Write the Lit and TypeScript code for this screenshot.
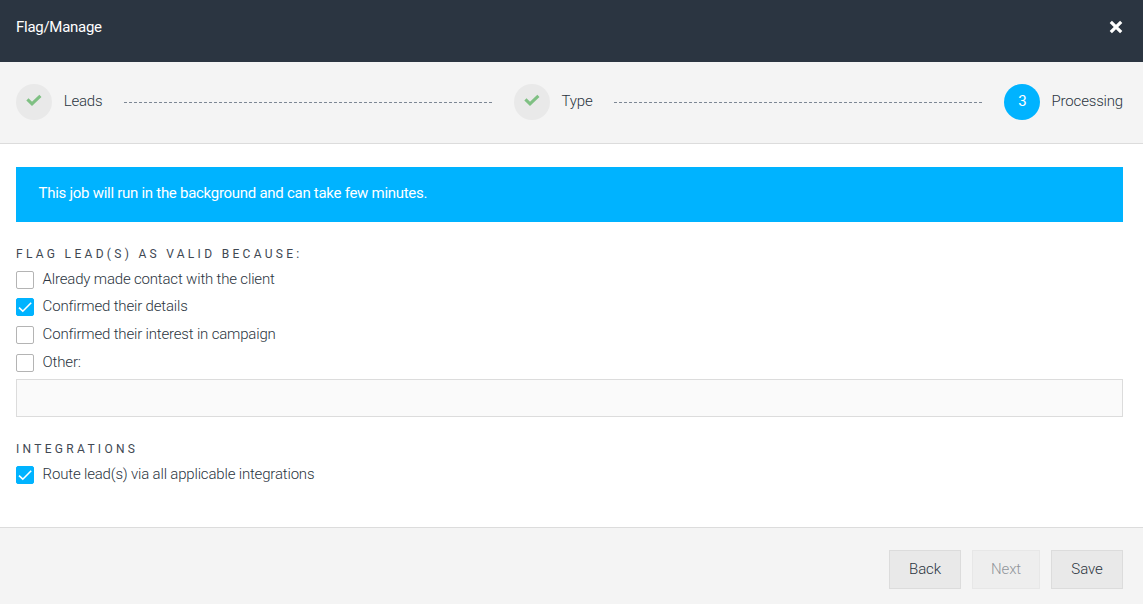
import { LitElement, css, html, svg } from "lit";
import { customElement, property, state } from "lit/decorators.js";

interface Reason {
  label: string;
  checked: boolean;
}

const STEPS = ["Leads", "Type", "Processing"];

/** Checkbox with a text label. */
@customElement("flag-checkbox")
export class FlagCheckbox extends LitElement {
  @property({ type: Boolean, reflect: true }) checked = false;
  @property() label = "";

  static override styles = css`
    :host {
      display: flex;
      align-items: flex-start;
      gap: 8.6px;
      cursor: pointer;
    }

    .box {
      box-sizing: border-box;
      flex: none;
      width: 18px;
      height: 18px;
      margin-top: 2px;
      border: 1px solid #b4b4b4;
      border-radius: 2px;
      background: #fff;
    }

    :host([checked]) .box {
      border-color: #00b3ff;
      background: #00b3ff;
    }

    .tick {
      display: block;
      width: 16px;
      height: 16px;
      fill: none;
      stroke: #fff;
      stroke-width: 1.6;
    }

    .label {
      line-height: 20px;
    }
  `;

  override render() {
    return html`
      <span class="box" role="checkbox" aria-checked=${this.checked}>
        ${this.checked
          ? html`<svg class="tick" viewBox="0 0 16 16">${svg`<path d="M2 8.6L5.8 12.2L14.2 3.8" />`}</svg>`
          : null}
      </span>
      <span class="label">${this.label}</span>
    `;
  }
}

/** Numbered wizard progress; finished steps show a tick. */
@customElement("flag-steps")
export class FlagSteps extends LitElement {
  @property({ type: Number }) current = 0;

  static override styles = css`
    :host {
      box-sizing: border-box;
      display: flex;
      align-items: center;
      height: 82px;
      padding: 0 20px 2px 16px;
      border-bottom: 1px solid #dcdcdc;
      background: #f4f4f4;
    }

    .badge {
      display: flex;
      flex: none;
      align-items: center;
      justify-content: center;
      width: 36px;
      height: 36px;
      border-radius: 50%;
      background: #e9e9e9;
    }

    .badge.active {
      background: #00b3ff;
      color: #fff;
      font-weight: 400;
    }

    .number,
    .name {
      line-height: 20px;
      padding-bottom: 2px;
    }

    .number {
      padding-left: 1px;
    }

    .name {
      margin-left: 11.7px;
    }

    .tick {
      width: 16px;
      height: 12px;
      margin-bottom: 3px;
      margin-left: 0.5px;
      fill: none;
      stroke: #7fc083;
      stroke-width: 3.1;
    }

    .line {
      flex: 1;
      height: 1px;
      margin: 1px 22px 0;
      background: repeating-linear-gradient(90deg, #7d8794 0 3px, transparent 3px 5px);
    }
  `;

  override render() {
    return STEPS.map(
      (name, i) => html`
        ${i > 0 ? html`<span class="line"></span>` : null}
        <span class="badge ${i === this.current ? "active" : ""}">
          ${i < this.current
            ? html`<svg class="tick" viewBox="0 0 16 12">${svg`<path d="M1.4 5.3L6 9.8L14.4 1.8" />`}</svg>`
            : html`<span class="number">${i + 1}</span>`}
        </span>
        <span class="name">${name}</span>
      `
    );
  }
}

@customElement("app-root")
export class AppRoot extends LitElement {
  @state() private reasons: Reason[] = [
    { label: "Already made contact with the client", checked: false },
    { label: "Confirmed their details", checked: true },
    { label: "Confirmed their interest in campaign", checked: false },
    { label: "Other:", checked: false },
  ];
  @state() private route = true;

  static override styles = css`
    :host {
      box-sizing: border-box;
      display: flex;
      flex-direction: column;
      height: 604px;
      background: #fff;
      color: #2b3541;
      font: 300 15px/20px Roboto, sans-serif;
      letter-spacing: -0.175px;
    }

    *,
    *::before,
    *::after {
      box-sizing: border-box;
    }

    .header {
      display: flex;
      align-items: flex-start;
      justify-content: space-between;
      height: 62px;
      padding: 17px 20px 0 16px;
      background: #2b3541;
      color: #fff;
      font-weight: 400;
      letter-spacing: -0.28px;
    }

    .close {
      display: flex;
      padding: 0;
      border: 0;
      margin-top: 2.6px;
      background: none;
    }

    .close svg {
      width: 14px;
      height: 14px;
      stroke: #fff;
      stroke-width: 3.2;
    }

    .body {
      flex: 1;
      padding: 23px 20px 0 16px;
    }

    .notice {
      height: 55px;
      padding: 16px 22.6px;
      background: #00b3ff;
      color: #fff;
      font-weight: 400;
      letter-spacing: -0.28px;
    }

    .heading {
      margin: 24px 0 6.8px;
      color: #404853;
      font-size: 12px;
      font-weight: 400;
      line-height: 16px;
      letter-spacing: 3.3px;
      text-transform: uppercase;
    }

    .reasons {
      display: grid;
      grid-auto-rows: 27.6px;
    }

    .other {
      display: block;
      width: 100%;
      height: 38px;
      margin-top: -0.2px;
      border: 1px solid #dcdcdc;
      background: #fafafa;
      font: inherit;
    }

    .footer {
      display: flex;
      justify-content: flex-end;
      gap: 11px;
      height: 77px;
      padding: 22px 20px 0;
      border-top: 1px solid #dcdcdc;
      background: #f4f4f4;
    }

    .button {
      width: 72px;
      height: 39px;
      padding: 0 0 2px;
      border: 1px solid #dcdcdc;
      background: #e9e9e9;
      color: inherit;
      font: inherit;
      letter-spacing: -0.1px;
    }

    .button:disabled {
      width: 68px;
      opacity: 0.5;
    }
  `;

  private toggle(index: number) {
    this.reasons = this.reasons.map((r, i) => (i === index ? { ...r, checked: !r.checked } : r));
  }

  override render() {
    return html`
      <header class="header">
        <span>Flag/Manage</span>
        <button class="close" aria-label="Close">
          <svg viewBox="0 0 14 14"><path d="M1.8 1.8L12.2 12.2M12.2 1.8L1.8 12.2" /></svg>
        </button>
      </header>
      <flag-steps .current=${2}></flag-steps>
      <main class="body">
        <div class="notice">This job will run in the background and can take few minutes.</div>
        <h2 class="heading">Flag lead(s) as valid because:</h2>
        <div class="reasons">
          ${this.reasons.map(
            (r, i) => html`
              <flag-checkbox .label=${r.label} .checked=${r.checked} @click=${() => this.toggle(i)}></flag-checkbox>
            `
          )}
        </div>
        <input class="other" aria-label="Other" />
        <h2 class="heading">Integrations</h2>
        <flag-checkbox
          label="Route lead(s) via all applicable integrations"
          .checked=${this.route}
          @click=${() => (this.route = !this.route)}
        ></flag-checkbox>
      </main>
      <footer class="footer">
        <button class="button">Back</button>
        <button class="button" disabled>Next</button>
        <button class="button">Save</button>
      </footer>
    `;
  }
}

declare global {
  interface HTMLElementTagNameMap {
    "app-root": AppRoot;
    "flag-checkbox": FlagCheckbox;
    "flag-steps": FlagSteps;
  }
}
